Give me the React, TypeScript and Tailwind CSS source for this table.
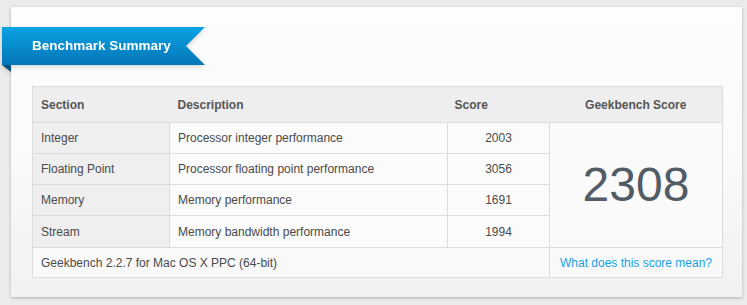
const ROWS = [
  { section: "Integer", description: "Processor integer performance", score: 2003 },
  { section: "Floating Point", description: "Processor floating point performance", score: 3056 },
  { section: "Memory", description: "Memory performance", score: 1691 },
  { section: "Stream", description: "Memory bandwidth performance", score: 1994 },
];

export default function App() {
  return (
    <div className="h-[305px] w-[747px] bg-[#ebebeb] pt-[7px] pl-[11px] font-['Liberation_Sans',Arial,sans-serif]">
      <div className="h-[290px] w-[731px] bg-gradient-to-b from-[#fdfdfd] via-[#fafafa] to-[#f1f1f1] shadow-[0_1px_3px_rgba(0,0,0,0.25)] pt-[20px]">
        {/* ribbon */}
        <div className="relative -ml-[9px] w-[203px] drop-shadow-[0_2px_2px_rgba(0,0,0,0.15)]">
          <div className="flex h-[38px] items-center bg-gradient-to-b from-[#0aa3e3] to-[#0676b8] pl-[30px] [clip-path:polygon(0_0,100%_0,184px_50%,100%_100%,0_100%)]">
            <span className="text-[13.5px] font-bold text-white">Benchmark Summary</span>
          </div>
          <div className="h-[7px] w-[9px] bg-[#05527f] [clip-path:polygon(0_0,100%_0,100%_100%)]" />
        </div>

        <table className="mt-[14px] ml-[21px] w-[690px] table-fixed border-collapse border border-[#dcdcdc] text-[12px] text-[#4a4a4a]">
          <colgroup>
            <col className="w-[137px]" />
            <col className="w-[278px]" />
            <col className="w-[102px]" />
            <col className="w-[173px]" />
          </colgroup>
          <thead>
            <tr className="h-[36px] bg-[#eeeeee] text-[#555] font-bold">
              <th className="px-2 text-left">Section</th>
              <th className="px-2 text-left">Description</th>
              <th className="px-[7px] text-left">Score</th>
              <th className="px-2 text-center">Geekbench Score</th>
            </tr>
          </thead>
          <tbody>
            {ROWS.map((r, i) => (
              <tr key={r.section} className={i === 3 ? "h-[32px]" : "h-[31px]"}>
                <td className="border border-[#dcdcdc] bg-[#efefef] px-2">{r.section}</td>
                <td className="border border-[#dcdcdc] bg-[#fbfbfb] px-2">{r.description}</td>
                <td className="border border-[#dcdcdc] bg-[#fbfbfb] px-2 text-center">{r.score}</td>
                {i === 0 && (
                  <td rowSpan={4} className="border border-[#dcdcdc] bg-[#fafafa] text-center text-[48px] leading-none text-[#525c67]">
                    2308
                  </td>
                )}
              </tr>
            ))}
            <tr className="h-[30px]">
              <td colSpan={3} className="border border-[#dcdcdc] bg-[#f9f9f9] px-2">
                Geekbench 2.2.7 for Mac OS X PPC (64-bit)
              </td>
              <td className="border border-[#dcdcdc] bg-[#f9f9f9] text-center">
                <a className="text-[#1a9fe4]">What does this score mean?</a>
              </td>
            </tr>
          </tbody>
        </table>
      </div>
    </div>
  );
}
